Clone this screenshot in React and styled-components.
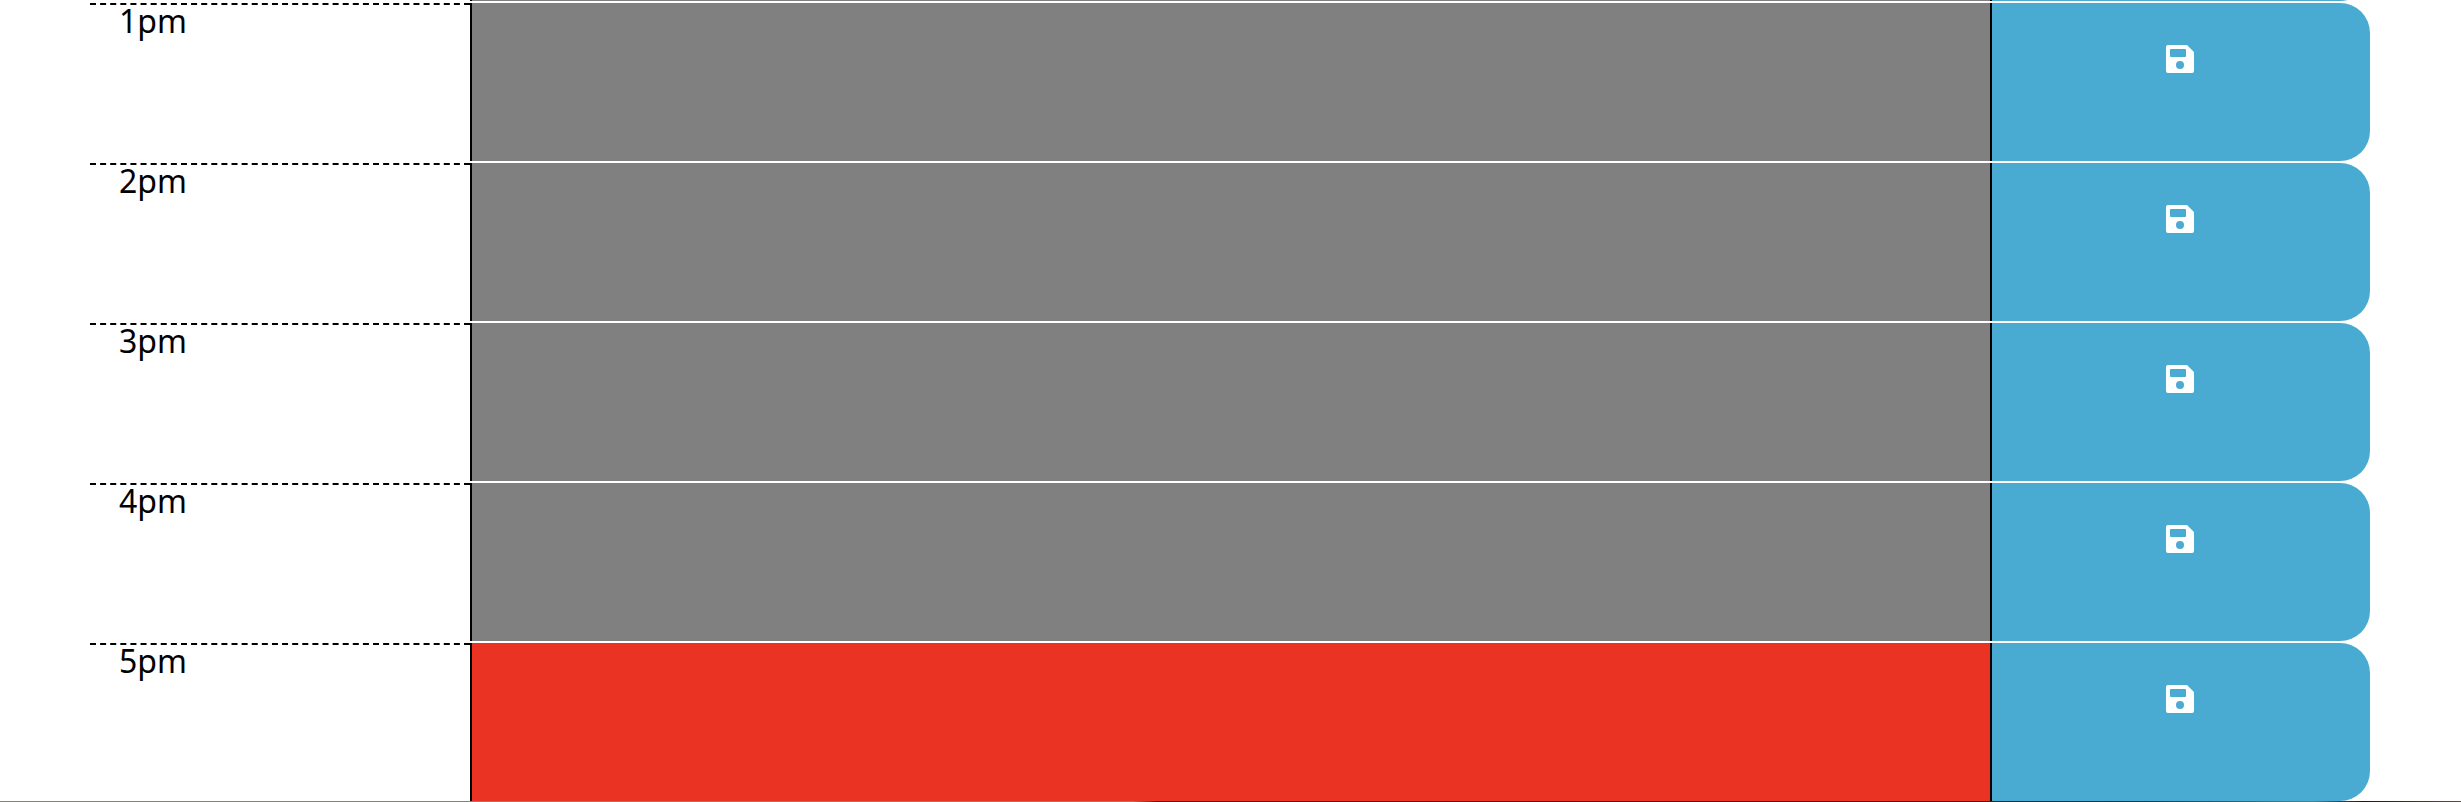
import React from "react";
import styled, { createGlobalStyle } from "styled-components";

const GlobalStyle = createGlobalStyle`
  body {
    margin: 0;
    background: #fff;
    color: #000;
    font-family: "Noto Sans", "Open Sans", sans-serif;
    font-size: 32px;
    line-height: 32px;
  }
`;

const Planner = styled.main`
  display: flex;
  flex-direction: column;
  gap: 2px;
  padding: 0 91px 0 90px;
`;

const PreviousBlock = styled.div`
  display: flex;
  flex-direction: column;
  justify-content: flex-end;
  height: 1px;
  overflow: hidden;
`;

const TimeBlock = styled.section`
  display: grid;
  grid-template-columns: 1fr 4fr 1fr;
  flex-shrink: 0;
  height: 158px;
`;

const Hour = styled.label`
  box-sizing: border-box;
  padding: 0 29px;
  border-top: 2px dashed #000;
`;

const Description = styled.textarea`
  box-sizing: border-box;
  width: 100%;
  height: 100%;
  margin: 0;
  padding: 4px 29px;
  border: 0;
  border-left: 2px solid #000;
  border-radius: 0;
  outline: 0;
  resize: none;
  background: ${({ $current }) => ($current ? "#ea3323" : "#808080")};
  color: #fff;
  font: inherit;
`;

const SaveButton = styled.button`
  display: flex;
  justify-content: center;
  align-items: flex-start;
  margin: 0;
  padding: 42px 2px 0 0;
  border: 0;
  border-left: 2px solid #000;
  border-radius: 0 30px 30px 0;
  background: #4aabd2;
  color: #fff;
  cursor: pointer;
`;

const SaveIcon = styled.svg`
  display: block;
  width: 28px;
  height: 28px;
  fill: currentColor;
`;

const FooterEdge = styled.footer`
  height: 1px;
  background: linear-gradient(90deg, #85847a 0%, #85847a 46%, #3b2a22 47%, #2b211d 80%, #3a302a 87%, #7d7068 94%, #1c1715 96%, #5a5040 100%);
`;

const hours = ["1pm", "2pm", "3pm", "4pm", "5pm"];
const currentHour = "5pm";

function Block({ hour, current }) {
  const id = `plan-${hour || "previous"}`;
  return (
    <TimeBlock>
      <Hour htmlFor={id}>{hour}</Hour>
      <Description id={id} $current={current} />
      <SaveButton type="button" aria-label="Save">
        <SaveIcon viewBox="0 0 28 28" aria-hidden="true">
          <path
            fillRule="evenodd"
            d="M2 0H21L28 7V26A2 2 0 0 1 26 28H2A2 2 0 0 1 0 26V2A2 2 0 0 1 2 0ZM5 4A1 1 0 0 0 4 5V11A1 1 0 0 0 5 12H19A1 1 0 0 0 20 11V5A1 1 0 0 0 19 4ZM14 16A4 4 0 1 0 14 24A4 4 0 1 0 14 16Z"
          />
        </SaveIcon>
      </SaveButton>
    </TimeBlock>
  );
}

export default function App() {
  return (
    <>
      <GlobalStyle />
      <Planner>
        <PreviousBlock>
          <Block />
        </PreviousBlock>
        {hours.map((hour) => (
          <Block key={hour} hour={hour} current={hour === currentHour} />
        ))}
      </Planner>
      <FooterEdge />
    </>
  );
}
